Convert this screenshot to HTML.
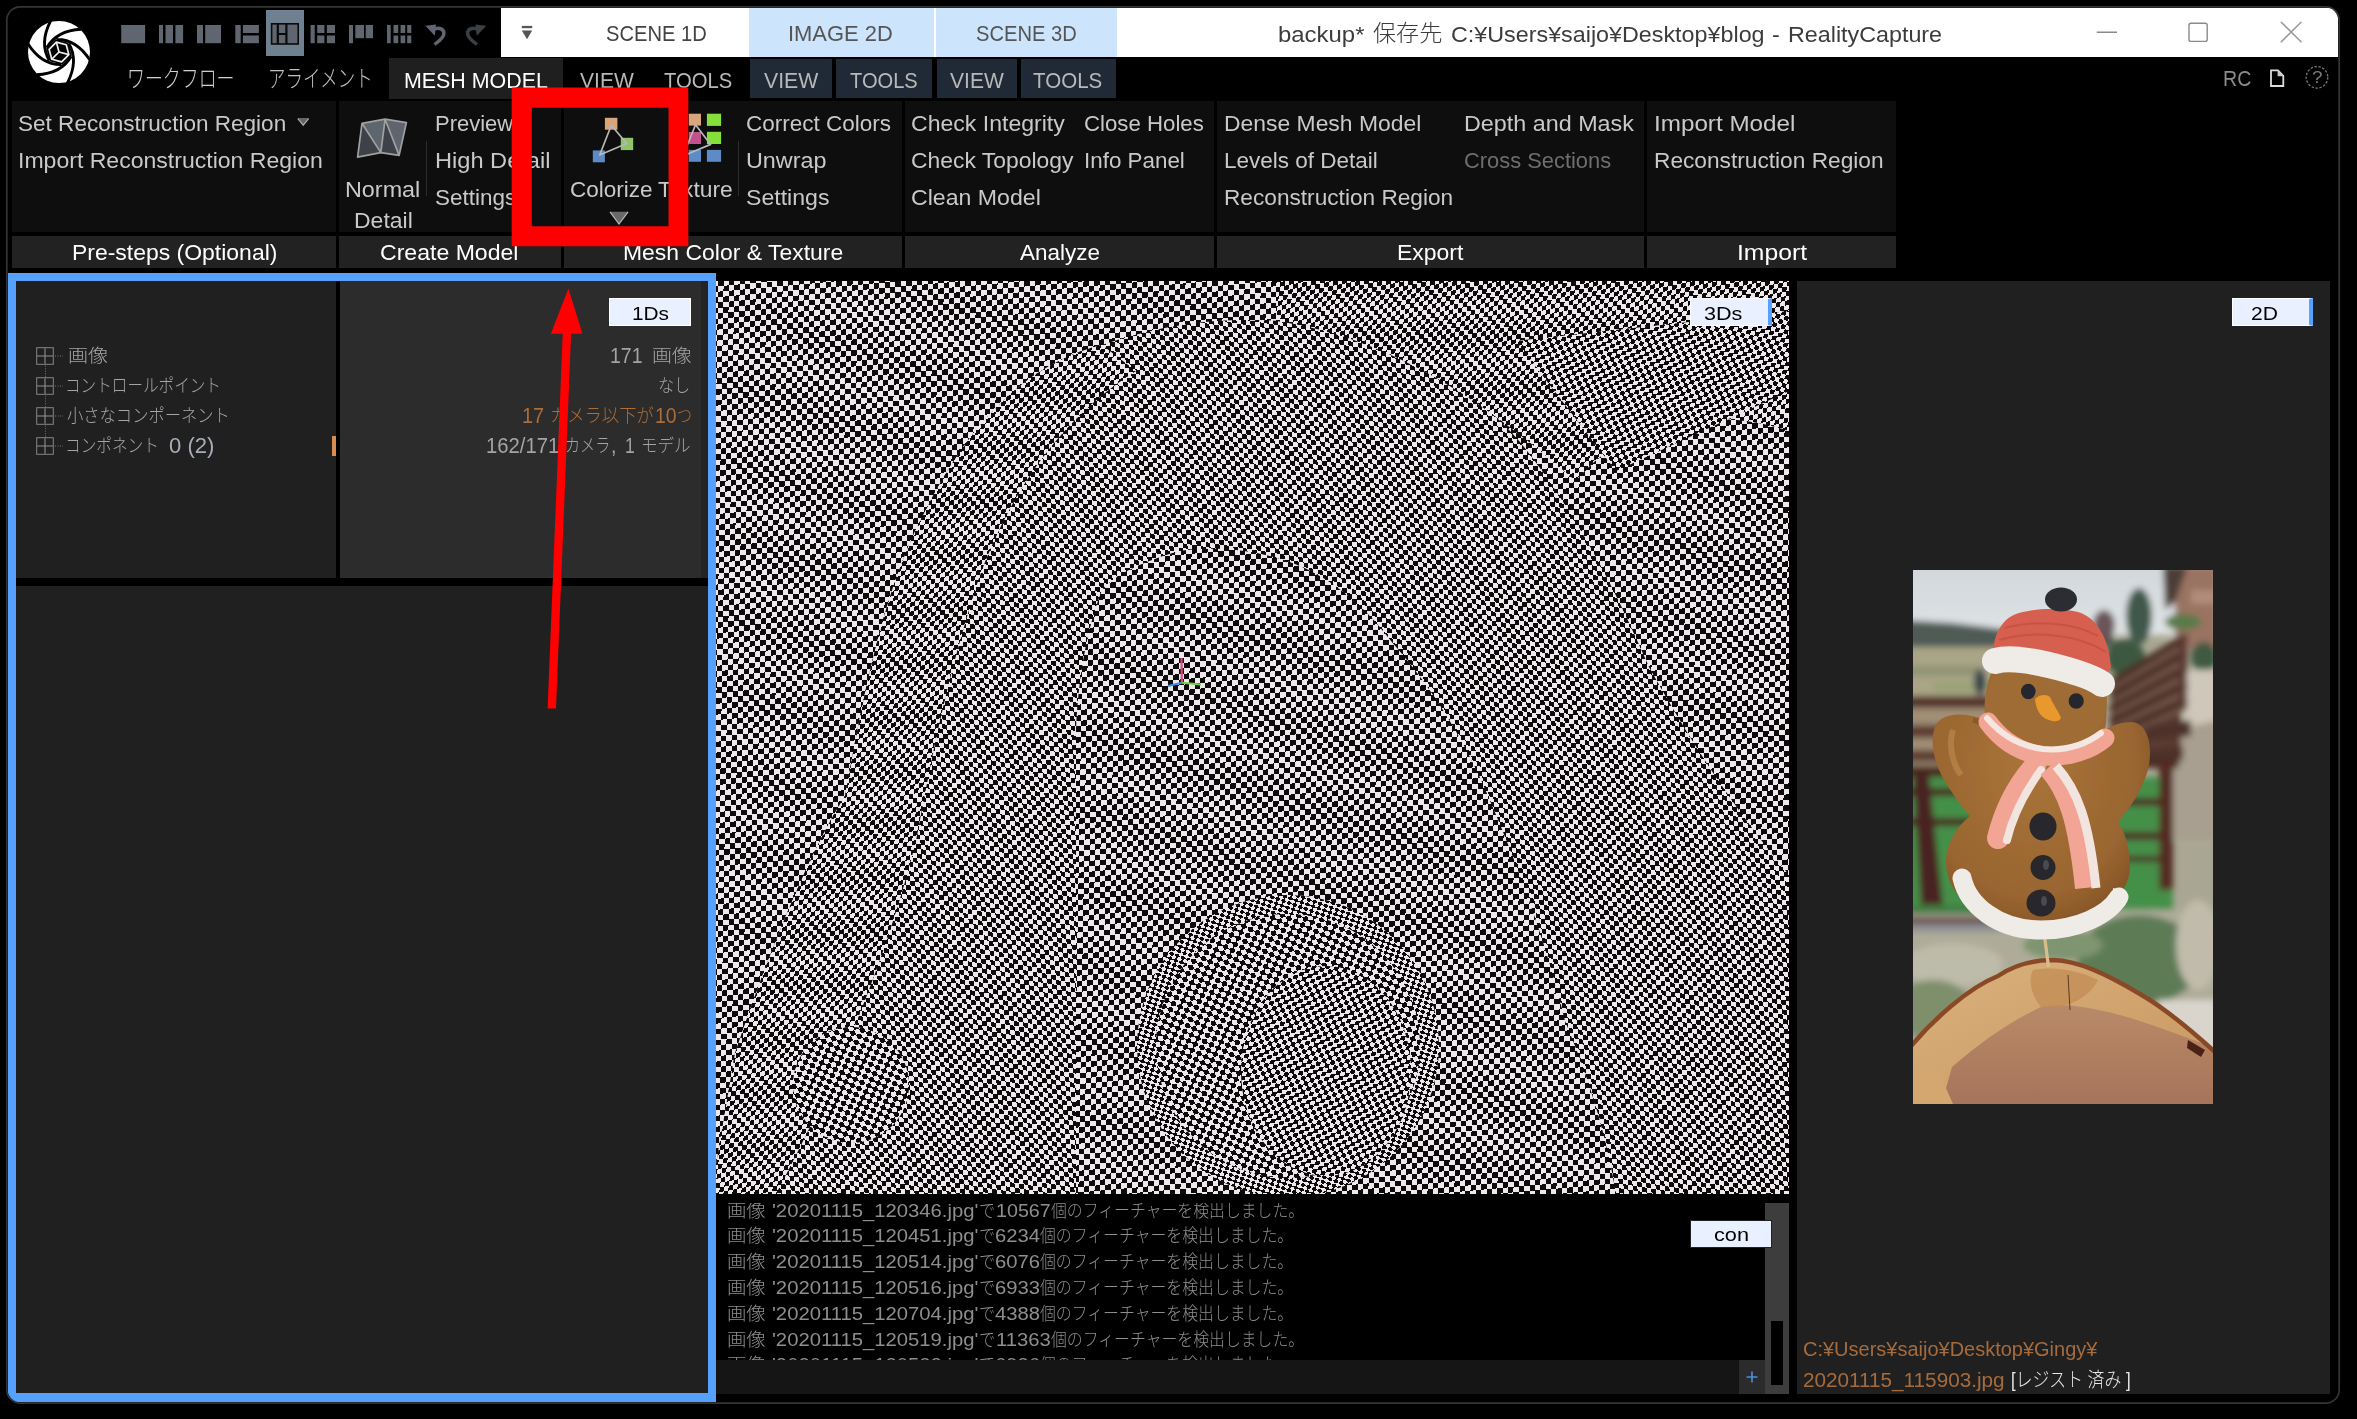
<!DOCTYPE html>
<html lang="ja"><head><meta charset="utf-8"><title>RealityCapture</title>
<style>
html,body{margin:0;padding:0;background:#000;}
body{width:2357px;height:1419px;position:relative;overflow:hidden;font-family:"Liberation Sans","Noto Sans CJK JP",sans-serif;}
.a{position:absolute;}
.t{position:absolute;white-space:pre;transform-origin:0 0;display:block;}

#texts,#over,#base{position:absolute;left:0;top:0;width:2357px;height:1419px;}
#base{clip-path:inset(7.6px 18.9px 16.9px 7.6px round 12.5px);}
.rb{position:absolute;background:#0e0e0e;top:101px;height:131px;}
.rl{position:absolute;background:#222222;top:236px;height:32px;}
.vd{position:absolute;width:1px;background:#2c2c2c;top:141px;height:55px;}
.lbl{position:absolute;background:#e9f0ff;border:1px solid #fff;box-sizing:border-box;}
.v3{position:absolute;left:716px;top:281px;width:1073px;height:913px;overflow:hidden;isolation:isolate;background:#0c0a0b;}
.cl{position:absolute;left:0;top:0;width:1073px;height:913px;}
.ckr{position:absolute;left:-500px;top:-500px;width:2073px;height:1913px;transform-origin:50% 50%;}
.ckr i,.ckr b{position:absolute;left:0;top:0;right:0;bottom:0;display:block;}
.ckr i{background:repeating-linear-gradient(90deg,#000 0,#000 var(--c),#eee8ec var(--c),#eee8ec calc(2*var(--c)));}
.ckr b{background:repeating-linear-gradient(0deg,#000 0,#000 var(--c),#eee8ec var(--c),#eee8ec calc(2*var(--c)));mix-blend-mode:difference;}
.lift{position:absolute;left:0;top:0;right:0;bottom:0;background:#0c0a0b;mix-blend-mode:lighten;}

</style></head>
<body>
<svg class="a" style="left:0;top:0;" width="2357" height="1419"><rect x="6.8" y="6.8" width="2332.4" height="1396.4" rx="13.5" fill="#000" stroke="#353535" stroke-width="1.7"/></svg>
<div id="base">
<!-- title bar -->
<div class="a" style="left:501px;top:8px;width:1837px;height:49px;background:#fff;"></div>
<div class="a" style="left:749px;top:8px;width:185px;height:49px;background:#cce4fc;"></div>
<div class="a" style="left:936px;top:8px;width:181px;height:49px;background:#cce4fc;"></div>
<!-- selected layout icon bg -->
<div class="a" style="left:266px;top:10px;width:38px;height:46px;background:#6f8090;"></div>
<!-- menu tabs -->
<div class="a" style="left:389px;top:58px;width:174px;height:41px;background:#1f1f1f;"></div>
<div class="a" style="left:750px;top:59px;width:82px;height:39px;background:#202a36;"></div>
<div class="a" style="left:836px;top:59px;width:96px;height:39px;background:#202a36;"></div>
<div class="a" style="left:937px;top:59px;width:80px;height:39px;background:#202a36;"></div>
<div class="a" style="left:1021px;top:59px;width:95px;height:39px;background:#202a36;"></div>
<!-- ribbon groups -->
<div class="rb" style="left:12px;width:324px;"></div><div class="rl" style="left:12px;width:324px;"></div>
<div class="rb" style="left:339px;width:222px;"></div><div class="rl" style="left:339px;width:222px;"></div>
<div class="rb" style="left:564px;width:338px;"></div><div class="rl" style="left:564px;width:338px;"></div>
<div class="rb" style="left:905px;width:309px;"></div><div class="rl" style="left:905px;width:309px;"></div>
<div class="rb" style="left:1217px;width:427px;"></div><div class="rl" style="left:1217px;width:427px;"></div>
<div class="rb" style="left:1647px;width:249px;"></div><div class="rl" style="left:1647px;width:249px;"></div>
<div class="vd" style="left:426px;"></div>
<div class="vd" style="left:738px;"></div>
<!-- left panel -->
<div class="a" style="left:8px;top:273px;width:708px;height:1129px;background:#55a1fd;"></div>
<div class="a" style="left:16px;top:281px;width:692px;height:1112px;background:#000;"></div>
<div class="a" style="left:16px;top:281px;width:320px;height:297px;background:#202020;"></div>
<div class="a" style="left:340px;top:281px;width:361px;height:297px;background:#2c2c2c;"></div>
<div class="a" style="left:701px;top:281px;width:7px;height:297px;background:#242424;"></div>
<div class="a" style="left:16px;top:586px;width:692px;height:807px;background:#202020;"></div>
<div class="a" style="left:332px;top:436px;width:4px;height:20px;background:#d98c52;"></div>
<!-- 3D view -->
<div class="v3">
<div class="ckr" style="--c:5.4px;transform:rotate(-5deg) skewX(-6deg);"><i></i><b></b></div>
<div class="cl" style="clip-path:path('M-5,913 L19,772 C60,650 100,560 129,515 C150,400 170,300 212,225 C260,130 320,80 386,64 C470,35 540,35 611,45 C700,70 760,110 804,161 C860,230 900,310 933,386 C980,470 1020,530 1078,600 L1078,913 L900,913 C890,850 870,790 849,740 C830,660 800,580 772,515 C745,450 710,400 675,360 C645,320 610,295 579,283 C540,268 500,265 463,270 C430,280 400,292 386,309 C370,350 362,400 360,450 L360,913 Z');"><div class="ckr" style="--c:4.7px;transform:rotate(9deg) skewX(14deg);"><i></i><b></b></div></div>
<div class="cl" style="clip-path:path('M19,772 C60,650 100,560 129,515 C150,400 170,300 212,225 C260,130 320,80 386,64 L420,90 C340,140 290,220 262,300 C230,400 215,480 200,560 C170,680 120,800 60,913 L-5,913 Z');"><div class="ckr" style="--c:4.6px;transform:rotate(-11deg) skewX(-18deg);"><i></i><b></b></div></div>
<div class="cl" style="clip-path:circle(151px at 572px 765px);"><div class="ckr" style="--c:3.8px;transform:rotate(-20deg) skewX(12deg);"><i></i><b></b></div></div>
<div class="cl" style="clip-path:circle(132px at 572px 765px);"><div class="ckr" style="--c:5.0px;transform:rotate(-16deg) skewX(6deg);"><i></i><b></b></div></div>
<div class="cl" style="clip-path:ellipse(85px 105px at 610px 790px);"><div class="ckr" style="--c:4.4px;transform:rotate(13deg) skewX(-8deg);"><i></i><b></b></div></div>
<div class="cl" style="clip-path:circle(58px at 135px 804px);"><div class="ckr" style="--c:5.0px;transform:rotate(-16deg) skewX(6deg);"><i></i><b></b></div></div>
<div class="cl" style="clip-path:path('M560,0 L1073,0 L1073,150 C980,120 900,150 860,200 C800,150 700,60 560,40 Z');"><div class="ckr" style="--c:4.6px;transform:rotate(-11deg) skewX(-18deg);"><i></i><b></b></div></div>
<div class="cl" style="clip-path:path('M800,60 L1073,30 L1073,110 L900,190 Z');"><div class="ckr" style="--c:4.4px;transform:rotate(13deg) skewX(-8deg);"><i></i><b></b></div></div>
<div class="lift"></div>
<svg class="a" style="left:0;top:0;" width="1073" height="913" viewBox="0 0 1073 913">
<path d="M465.8,401.7 L465.5,377" stroke="#d94a7a" stroke-width="2.2"/>
<path d="M465.8,401.7 L485,403.5" stroke="#6fd43a" stroke-width="2"/>
<path d="M465.8,401.7 L452,405" stroke="#3a8ae0" stroke-width="2"/>
</svg>
</div>
<!-- console -->
<div class="a" style="left:716px;top:1194px;width:1073px;height:166px;background:#000;"></div>
<div class="a" style="left:716px;top:1360px;width:1049px;height:34px;background:#151515;"></div>
<div class="a" style="left:1765px;top:1203px;width:24px;height:191px;background:#3d3d3d;"></div>
<div class="a" style="left:1771px;top:1321px;width:12px;height:64px;background:#000;"></div>
<div class="a" style="left:1739px;top:1360px;width:26px;height:34px;background:#2b2b2b;"></div>
<!-- 2D panel -->
<div class="a" style="left:1797px;top:281px;width:533px;height:1113px;background:#202020;"></div>
<svg class="a" style="left:1913px;top:570px;" width="300" height="534" viewBox="0 0 300 534">
<defs>
<filter id="b3" x="-10%" y="-10%" width="120%" height="120%"><feGaussianBlur stdDeviation="3"/></filter>
<filter id="b1" x="-10%" y="-10%" width="120%" height="120%"><feGaussianBlur stdDeviation="1.2"/></filter>
<filter id="b05"><feGaussianBlur stdDeviation="0.6"/></filter>
<linearGradient id="sky" x1="0" y1="0" x2="0" y2="1"><stop offset="0" stop-color="#cfd6db"/><stop offset="1" stop-color="#dfe3e4"/></linearGradient>
<radialGradient id="ck1" cx="0.45" cy="0.4" r="0.7"><stop offset="0" stop-color="#a9753a"/><stop offset="0.7" stop-color="#996530"/><stop offset="1" stop-color="#7a4c22"/></radialGradient>
<linearGradient id="wood" x1="0" y1="0" x2="1" y2="1"><stop offset="0" stop-color="#dab27c"/><stop offset="1" stop-color="#c89560"/></linearGradient>
<linearGradient id="heart" x1="0" y1="0" x2="0" y2="1"><stop offset="0" stop-color="#b98a68"/><stop offset="1" stop-color="#a6735a"/></linearGradient>
<clipPath id="pc"><rect width="300" height="534"/></clipPath>
</defs>
<g clip-path="url(#pc)">
<rect width="300" height="534" fill="#a9a794"/>
<g filter="url(#b3)">
<rect x="-10" y="-10" width="320" height="75" fill="url(#sky)"/>
<path d="M-10,50 L40,53 L90,59 L200,62 L200,82 L-10,80 Z" fill="#4f5b56"/>
<rect x="-10" y="77" width="215" height="55" fill="#aaa587"/>
<rect x="-10" y="96" width="80" height="10" fill="#8f9474"/>
<rect x="20" y="112" width="60" height="10" fill="#9aa377"/>
<ellipse cx="67" cy="112" rx="6" ry="13" fill="#39424d"/>
<!-- right building / trees -->
<path d="M252,-5 L305,-5 L305,80 L262,80 L262,30 Z" fill="#9a7362"/>
<path d="M250,-5 L275,-5 L262,32 L252,40 Z" fill="#4d3d38"/>
<rect x="278" y="20" width="25" height="14" fill="#b08c7c"/>
<ellipse cx="226" cy="46" rx="13" ry="28" fill="#40594b"/>
<ellipse cx="191" cy="55" rx="11" ry="15" fill="#6a5558"/>
<ellipse cx="212" cy="88" rx="20" ry="19" fill="#3d5840"/>
<ellipse cx="270" cy="52" rx="18" ry="8" fill="#5a7a4a"/>
<ellipse cx="291" cy="87" rx="13" ry="15" fill="#3f5a42"/>
<rect x="270" y="100" width="35" height="62" fill="#cfc8ba"/>
<path d="M262,160 L305,150 L305,270 L258,270 Z" fill="#a99f90"/><path d="M205,140 L268,120 L268,190 L205,190 Z" fill="#5a3a30"/>
<!-- left deck -->
<rect x="-10" y="126" width="95" height="84" fill="#a08e76"/>
<rect x="-10" y="126" width="90" height="12" fill="#553329"/>
<rect x="-10" y="155" width="90" height="13" fill="#5e3d32"/>
<rect x="-10" y="180" width="90" height="12" fill="#5e3d32"/>
<rect x="-10" y="196" width="100" height="13" fill="#48261f"/>
<!-- stairs rail right -->
<path d="M197,113 L274,66 L274,140 L197,172 Z" fill="#6f5548"/>
<path d="M197,113 L274,66 M197,126 L274,82 M197,139 L274,98 M197,152 L274,114 M197,165 L274,130" stroke="#4a2a23" stroke-width="7" fill="none"/>
<rect x="266" y="66" width="8" height="72" fill="#5a3830"/>
<path d="M233,156 L278,150 L278,166 L233,170 Z M225,182 L270,176 L270,190 L225,196 Z" fill="#4e3029"/>
<!-- grass + fences lower -->
<rect x="-10" y="207" width="270" height="140" fill="#459048"/>
<rect x="-10" y="218" width="95" height="8" fill="#4a2621"/>
<rect x="-10" y="248" width="95" height="8" fill="#4a2621"/>
<path d="M0,205 L16,205 L30,335 L8,335 Z" fill="#4a2420"/>
<rect x="200" y="189" width="66" height="9" fill="#4e2c26"/>
<rect x="200" y="228" width="60" height="8" fill="#4e2c26"/>
<rect x="200" y="262" width="58" height="8" fill="#4e2c26"/>
<rect x="205" y="286" width="50" height="6" fill="#4e2c26"/>
<rect x="246" y="190" width="14" height="130" fill="#522a24"/>
<!-- lower ground -->
<rect x="-10" y="340" width="320" height="150" fill="#aeac99"/>
<rect x="-10" y="336" width="110" height="8" fill="#3d7a3f"/>
<rect x="-10" y="347" width="100" height="7" fill="#6b4b4a"/>
<rect x="-10" y="354" width="100" height="8" fill="#8d9094"/>
<ellipse cx="226" cy="390" rx="62" ry="45" fill="#5d7b57"/>
<ellipse cx="150" cy="375" rx="40" ry="15" fill="#7f9470"/>
<ellipse cx="40" cy="395" rx="50" ry="22" fill="#bdbba9"/>
<ellipse cx="20" cy="440" rx="40" ry="30" fill="#7f8f6c"/>
<ellipse cx="285" cy="375" rx="22" ry="45" fill="#c0bbab"/>
<rect x="245" y="430" width="60" height="50" fill="#d9d5cd"/>
</g>
<!-- log -->
<g filter="url(#b05)">
<path d="M-2,476 C20,450 55,418 85,406 C100,396 120,390 140,390 C165,391 190,402 227,424 C255,440 280,462 302,482 L302,536 L-2,536 Z" fill="url(#wood)"/>
<path d="M39,497 C70,470 100,450 128,437 C150,433 170,436 190,441 C215,446 240,455 302,478 L302,536 L28,536 Z" fill="url(#heart)"/>
<path d="M120,400 C140,396 165,400 185,410 C175,430 150,440 128,437 C118,425 115,410 120,400 Z" fill="#c08a52" opacity="0.7"/>
<path d="M-2,476 C20,450 55,418 85,406 C100,396 120,390 140,390 C165,391 190,402 227,424 C255,440 280,462 302,482" fill="none" stroke="#8a4a26" stroke-width="4.5"/>
<path d="M275,470 L292,480 L288,487 L274,478 Z" fill="#4a2418"/>
<path d="M155,405 L157,440" stroke="#5a3a20" stroke-width="1"/>
<path d="M0,495 L25,500 L40,534 L0,534 Z" fill="#d4a770"/>
</g>
<!-- stick -->
<path d="M131.5,366 L135.5,397" stroke="#dcbc8e" stroke-width="3.2"/>
<!-- cookie -->
<g filter="url(#b05)">
<path d="M72,150 C55,143 35,142 25,152 C15,165 20,190 30,208 C40,225 50,238 57,246 C42,258 33,275 33,292 C33,330 75,357 125,357 C175,357 217,330 217,297 C217,278 212,262 205,252 C220,235 232,215 236,195 C240,170 232,152 218,152 C208,152 198,156 192,160 C197,130 190,100 170,88 L90,85 C75,100 70,125 72,150 Z" fill="url(#ck1)"/>
<ellipse cx="133" cy="132" rx="61" ry="50" fill="#a06c34"/>
<path d="M40,160 C35,175 40,195 48,205" stroke="#c49355" stroke-width="6" fill="none" opacity="0.5"/>
<path d="M60,150 C70,152 75,158 78,165" stroke="#7a4e22" stroke-width="5" fill="none" opacity="0.6"/>
</g>
<!-- bottom icing arc -->
<path d="M49,308 C55,335 85,360 128,360 C165,360 195,345 206,327" fill="none" stroke="#efebe6" stroke-width="19" stroke-linecap="round"/>
<path d="M200,318 L214,322 L212,336 L200,334 Z" fill="#efebe6"/>
<!-- hat -->
<path d="M80,80 C82,60 92,45 110,42 C125,38 150,38 165,42 C185,48 196,70 198,97 L190,110 L85,92 Z" fill="#d65f4f"/>
<path d="M92,58 C120,50 160,52 185,66 M86,70 C120,60 165,64 193,82" stroke="#c24f42" stroke-width="2" fill="none" opacity="0.7"/>
<ellipse cx="148" cy="29.5" rx="16" ry="12" fill="#2b2d33"/>
<path d="M82,91 C100,86 130,93 155,100 C172,105 184,110 189,114" fill="none" stroke="#efebe7" stroke-width="26" stroke-linecap="round"/>
<!-- face -->
<ellipse cx="115.3" cy="121.5" rx="7.3" ry="7.8" fill="#25272e" filter="url(#b05)"/>
<ellipse cx="163.2" cy="131" rx="7.6" ry="7.8" fill="#25272e" filter="url(#b05)"/>
<path d="M122,129 C126,124 134,124 137,127 C141,136 146,142 148,148 C146,152 141,152 136,150 C128,148 123,140 122,129 Z" fill="#e8982c"/>
<!-- scarf -->
<path d="M75,152 C88,170 105,182 130,186 C155,188 178,180 192,168" fill="none" stroke="#f3a595" stroke-width="19" stroke-linecap="round"/>
<path d="M74,148 C88,165 108,176 130,179 C152,181 172,175 188,163" fill="none" stroke="#f4e6e0" stroke-width="6" stroke-linecap="round"/>
<path d="M122,196 C105,215 92,240 85,268" fill="none" stroke="#f3a595" stroke-width="22" stroke-linecap="round"/>
<path d="M128,200 C112,222 100,245 94,270" fill="none" stroke="#f2e4de" stroke-width="8" stroke-linecap="round"/>
<path d="M135,198 C155,220 165,250 172,318" fill="none" stroke="#f3a595" stroke-width="20" stroke-linecap="butt"/>
<path d="M143,196 C165,220 176,252 183,318" fill="none" stroke="#f2e4de" stroke-width="9" stroke-linecap="butt"/>
<!-- buttons -->
<ellipse cx="130" cy="256.5" rx="13.5" ry="14" fill="#27272c"/>
<ellipse cx="130" cy="297.5" rx="12.5" ry="12.5" fill="#27272c"/>
<ellipse cx="128" cy="333" rx="14.5" ry="13.5" fill="#27272c"/>
<ellipse cx="133" cy="295" rx="3" ry="5" fill="#5a5a62" opacity="0.7"/>
<ellipse cx="131" cy="331" rx="3" ry="5" fill="#5a5a62" opacity="0.7"/>
</g>
</svg>

<svg class="a" style="left:24.6px;top:18.4px;" width="68" height="68" viewBox="-34 -34 68 68">
<circle r="31" fill="#fff"/>
<path d="M30.92,8.03 Q17.20,-13.05 -2.41,-12.56 M8.51,30.79 Q19.90,8.37 9.67,-8.37 M-22.41,22.76 Q2.70,21.42 12.08,4.19 M-30.92,-8.03 Q-17.20,13.05 2.41,12.56 M-8.51,-30.79 Q-19.90,-8.37 -9.67,8.37 M22.41,-22.76 Q-2.70,-21.42 -12.08,-4.19" fill="none" stroke="#000" stroke-width="2.9"/>
<polygon points="12.75,3.42 3.42,12.75 -9.33,9.33 -12.75,-3.42 -3.42,-12.75 9.33,-9.33" fill="#000"/>
<polygon points="9.85,2.64 2.64,9.85 -7.21,7.21 -9.85,-2.64 -2.64,-9.85 7.21,-7.21" fill="#000" stroke="#f0f0f0" stroke-width="1.7" stroke-linejoin="round"/>
<path d="M0,0 L9.85,2.64 M0,0 L-7.21,7.21 M0,0 L-2.64,-9.85" stroke="#f0f0f0" stroke-width="1.7"/>
</svg>
<svg class="a" style="left:0;top:0;" width="2357" height="1419" viewBox="0 0 2357 1419">
<rect x="121.2" y="25" width="23.9" height="18.2" fill="#5f6670"/>
<rect x="159" y="25" width="4.0" height="18.2" fill="#5f6670"/>
<rect x="165.5" y="25" width="7.5" height="18.2" fill="#5f6670"/>
<rect x="175.4" y="25" width="7.7" height="18.2" fill="#5f6670"/>
<rect x="197" y="25" width="6.0" height="18.2" fill="#5f6670"/>
<rect x="205.2" y="25" width="15.8" height="18.2" fill="#5f6670"/>
<rect x="235.3" y="25" width="5.4" height="18.2" fill="#5f6670"/>
<rect x="242.9" y="25" width="16.0" height="8.0" fill="#5f6670"/>
<rect x="242.9" y="35.5" width="16.0" height="7.7" fill="#5f6670"/>
<rect x="271.6" y="23.8" width="26.6" height="20.2" fill="#5f6670" stroke="#0a0a0a" stroke-width="1.6"/>
<path d="M277.8,24 V44 M286.4,24 V44 M277.8,34 H286.4" stroke="#0a0a0a" stroke-width="2.2" fill="none"/>
<rect x="310.6" y="25" width="4.1" height="18.2" fill="#5f6670"/>
<rect x="317.2" y="25" width="7.2" height="8.0" fill="#5f6670"/>
<rect x="326.9" y="25" width="8.1" height="8.0" fill="#5f6670"/>
<rect x="317.2" y="35.5" width="7.2" height="7.7" fill="#5f6670"/>
<rect x="326.9" y="35.5" width="8.1" height="7.7" fill="#5f6670"/>
<rect x="349" y="25" width="4.0" height="18.2" fill="#5f6670"/>
<rect x="355.3" y="25" width="8.7" height="13.2" fill="#5f6670"/>
<rect x="365.7" y="25" width="7.3" height="13.2" fill="#5f6670"/>
<rect x="387" y="25" width="3.7" height="18.2" fill="#5f6670"/>
<rect x="393.5" y="25" width="4.7" height="8.0" fill="#5f6670"/>
<rect x="393.5" y="35.5" width="4.7" height="7.7" fill="#5f6670"/>
<rect x="400.6" y="25" width="4.6" height="8.0" fill="#5f6670"/>
<rect x="400.6" y="35.5" width="4.6" height="7.7" fill="#5f6670"/>
<rect x="407.2" y="25" width="4.1" height="8.0" fill="#5f6670"/>
<rect x="407.2" y="35.5" width="4.1" height="7.7" fill="#5f6670"/>
<g transform="translate(425,24.3)"><path d="M8.5,5.2 C14,2.2 19.8,5 18.8,10 C18,14 13.5,17 9.5,20.2" fill="none" stroke="#5f6670" stroke-width="3.4" stroke-linecap="butt"/><path d="M0.3,1.5 L11,0.2 L9.8,11.5 Z" fill="#5f6670"/></g>
<g transform="translate(465.5,24.3) scale(-1,1) translate(-21,0)"><path d="M8.5,5.2 C14,2.2 19.8,5 18.8,10 C18,14 13.5,17 9.5,20.2" fill="none" stroke="#3c4046" stroke-width="3.4" stroke-linecap="butt"/><path d="M0.3,1.5 L11,0.2 L9.8,11.5 Z" fill="#3c4046"/></g>
<rect x="521.8" y="25.9" width="10.4" height="2.3" fill="#555"/><polygon points="521.8,30.5 532.2,30.5 527,39.2" fill="#555"/>
<path d="M2096.7,32.3 H2117" stroke="#8a8a8a" stroke-width="1.4"/>
<rect x="2189" y="23.2" width="18.2" height="18.2" rx="2" fill="none" stroke="#8a8a8a" stroke-width="1.4"/>
<path d="M2281.3,22.3 L2301,41.8 M2301,22.3 L2281.3,41.8" stroke="#9a9a9a" stroke-width="1.6" stroke-linecap="round"/>
<path d="M2271,70.3 H2278 L2283.3,75.8 V86 H2271 Z" fill="none" stroke="#dcdcdc" stroke-width="1.8"/><path d="M2277.6,70.5 L2283.2,76.2 H2277.6 Z" fill="#c8c8c8"/>
<circle cx="2317" cy="77.3" r="10.8" fill="none" stroke="#777" stroke-width="1.3" stroke-dasharray="2.4 1.6"/>
<polygon points="362.0,123.3 385.1,119.2 380.8,152.6" fill="#5e656e"/><polygon points="362.0,123.3 380.8,152.6 357.6,157.2" fill="#3e4147"/><polygon points="385.1,119.2 399.1,155.4 380.8,152.6" fill="#3e4147"/><polygon points="385.1,119.2 406.4,122.6 399.1,155.4" fill="#5e656e"/><path d="M362.0,123.3 L385.1,119.2 L406.4,122.6 L399.1,155.4 L380.8,152.6 L357.6,157.2 Z M362.0,123.3 L380.8,152.6 L385.1,119.2 L399.1,155.4" fill="none" stroke="#a0a0a0" stroke-width="1.7" stroke-linejoin="round"/>
<rect x="604.9" y="117.8" width="12.5" height="11.9" fill="#d9a67c"/><rect x="620.8" y="137.8" width="12.4" height="12.3" fill="#90c46c"/><rect x="592.8" y="150.4" width="12.1" height="11.9" fill="#5c8bc7"/>
<polygon points="611.3,125.3 626.7,143.5 599.7,155" fill="none" stroke="#b8b8b8" stroke-width="1.7" stroke-linejoin="round"/>
<polygon points="610,211.8 628.1,211.8 619,224.1" fill="#6a6a6a"/><path d="M610,211.8 L619,224.1 L628.1,211.8" fill="none" stroke="#b8b8b8" stroke-width="1.2"/>
<rect x="688.8" y="113.7" width="12.2" height="11.9" fill="#d9a67c"/><rect x="688.8" y="132" width="12.2" height="12.0" fill="#c2528c"/><rect x="688.8" y="149.9" width="12.2" height="11.9" fill="#5c8bc7"/>
<rect x="706.9" y="113.7" width="14.2" height="12.2" fill="#86e03c"/><rect x="706.9" y="131.8" width="14.2" height="12.2" fill="#86e03c"/><rect x="706.9" y="149.9" width="14.2" height="11.9" fill="#5c8bc7"/>
<polygon points="695.5,124.7 710.6,144.4 683,156" fill="none" stroke="#b8b8b8" stroke-width="1.7" stroke-linejoin="round"/>
<polygon points="297.5,118 309,118 303.2,125.6" fill="#666"/><path d="M297.8,118.6 L303.2,125.2 L308.7,118.6" fill="none" stroke="#a8a8a8" stroke-width="1.2"/>
<path d="M1746.5,1377 H1757.5 M1752,1371.5 V1382.5" stroke="#4a8fe0" stroke-width="1.6"/>
<rect x="36.7" y="347.7" width="16.6" height="16.6" fill="none" stroke="#858585" stroke-width="1"/><path d="M37,356.0 H53 M45,348.2 V363.8" stroke="#909090" stroke-width="1.1"/><path d="M55,356.0 H63" stroke="#777" stroke-width="1" stroke-dasharray="1 1.5"/>
<path d="M45.5,365.7 V376.7" stroke="#777" stroke-width="1" stroke-dasharray="1 1.5"/>
<rect x="36.7" y="377.7" width="16.6" height="16.6" fill="none" stroke="#858585" stroke-width="1"/><path d="M37,386.0 H53 M45,378.2 V393.8" stroke="#909090" stroke-width="1.1"/><path d="M55,386.0 H63" stroke="#777" stroke-width="1" stroke-dasharray="1 1.5"/>
<path d="M45.5,395.7 V406.7" stroke="#777" stroke-width="1" stroke-dasharray="1 1.5"/>
<rect x="36.7" y="407.7" width="16.6" height="16.6" fill="none" stroke="#858585" stroke-width="1"/><path d="M37,416.0 H53 M45,408.2 V423.8" stroke="#909090" stroke-width="1.1"/><path d="M55,416.0 H63" stroke="#777" stroke-width="1" stroke-dasharray="1 1.5"/>
<path d="M45.5,425.7 V436.7" stroke="#777" stroke-width="1" stroke-dasharray="1 1.5"/>
<rect x="36.7" y="437.7" width="16.6" height="16.6" fill="none" stroke="#858585" stroke-width="1"/><path d="M37,446.0 H53 M45,438.2 V453.8" stroke="#909090" stroke-width="1.1"/><path d="M55,446.0 H63" stroke="#777" stroke-width="1" stroke-dasharray="1 1.5"/>
</svg>

<!-- labels -->
<div class="lbl" style="left:609px;top:298px;width:82px;height:28px;"></div>
<div class="lbl" style="left:1690px;top:298px;width:82px;height:28px;border-right:4px solid #55a1fd;"></div>
<div class="lbl" style="left:2232px;top:298px;width:81px;height:28px;border-right:4px solid #55a1fd;"></div>
<div class="lbl" style="left:1690px;top:1220px;width:82px;height:28px;border:1px solid #222;"></div>
</div>

<div id="texts">
<span class="t" id="t0" style="left:1278.4px;top:23.8px;font-size:22.2px;line-height:22.2px;color:#3c3c3c;transform:scaleX(1.0784);">backup*</span>
<span class="t" id="t1" style="left:1373.4px;top:23.1px;font-size:22.5px;line-height:22.5px;color:#3c3c3c;font-weight:300;transform:scaleX(1.0264);">保存先</span>
<span class="t" id="t2" style="left:1450.7px;top:23.8px;font-size:22.2px;line-height:22.2px;color:#3c3c3c;transform:scaleX(1.0506);">C:¥Users¥saijo¥Desktop¥blog</span>
<span class="t" id="t3" style="left:1772.3px;top:23.8px;font-size:22.2px;line-height:22.2px;color:#3c3c3c;transform:scaleX(1.0521);">-</span>
<span class="t" id="t4" style="left:1788.4px;top:23.8px;font-size:22.2px;line-height:22.2px;color:#3c3c3c;transform:scaleX(1.0498);">RealityCapture</span>
<span class="t" id="t5" style="left:606.1px;top:23.7px;font-size:21.5px;line-height:21.5px;color:#444;transform:scaleX(0.9365);">SCENE 1D</span>
<span class="t" id="t6" style="left:788.1px;top:23.7px;font-size:21.5px;line-height:21.5px;color:#555;transform:scaleX(1.0192);">IMAGE 2D</span>
<span class="t" id="t7" style="left:976.1px;top:23.7px;font-size:21.5px;line-height:21.5px;color:#555;transform:scaleX(0.9365);">SCENE 3D</span>
<span class="t" id="t8" style="left:126.5px;top:68.3px;font-size:23.5px;line-height:23.5px;color:#d0d0d0;font-weight:300;transform:scaleX(0.7623);">ワークフロー</span>
<span class="t" id="t9" style="left:267.5px;top:68.3px;font-size:23.5px;line-height:23.5px;color:#c0c0c0;font-weight:300;transform:scaleX(0.7424);">アライメント</span>
<span class="t" id="t10" style="left:404.2px;top:69.5px;font-size:22.2px;line-height:22.2px;color:#ffffff;transform:scaleX(0.9645);">MESH MODEL</span>
<span class="t" id="t11" style="left:579.6px;top:69.5px;font-size:22.2px;line-height:22.2px;color:#b8b8b8;transform:scaleX(0.9481);">VIEW</span>
<span class="t" id="t12" style="left:663.6px;top:69.5px;font-size:22.2px;line-height:22.2px;color:#b8b8b8;transform:scaleX(0.9126);">TOOLS</span>
<span class="t" id="t13" style="left:763.6px;top:69.5px;font-size:22.2px;line-height:22.2px;color:#b8b8b8;transform:scaleX(0.9569);">VIEW</span>
<span class="t" id="t14" style="left:850.1px;top:69.5px;font-size:22.2px;line-height:22.2px;color:#b8b8b8;transform:scaleX(0.9059);">TOOLS</span>
<span class="t" id="t15" style="left:949.6px;top:69.5px;font-size:22.2px;line-height:22.2px;color:#b8b8b8;transform:scaleX(0.9481);">VIEW</span>
<span class="t" id="t16" style="left:1033.1px;top:69.5px;font-size:22.2px;line-height:22.2px;color:#b8b8b8;transform:scaleX(0.9260);">TOOLS</span>
<span class="t" id="t17" style="left:2223.1px;top:68.0px;font-size:22.4px;line-height:22.4px;color:#8c8c8c;transform:scaleX(0.8747);">RC</span>
<span class="t" id="t18" style="left:2311.6px;top:69.2px;font-size:17px;line-height:17px;color:#7a7a7a;transform:scaleX(1.1152);">?</span>
<span class="t" id="t19" style="left:18.4px;top:112.5px;font-size:22.5px;line-height:22.5px;color:#c9c9c9;transform:scaleX(1.0020);">Set Reconstruction Region</span>
<span class="t" id="t20" style="left:18.4px;top:149.8px;font-size:22.5px;line-height:22.5px;color:#c9c9c9;transform:scaleX(1.0243);">Import Reconstruction Region</span>
<span class="t" id="t21" style="left:345.1px;top:179.0px;font-size:22.5px;line-height:22.5px;color:#c9c9c9;transform:scaleX(1.0384);">Normal</span>
<span class="t" id="t22" style="left:353.5px;top:210.0px;font-size:22.5px;line-height:22.5px;color:#c9c9c9;transform:scaleX(1.0221);">Detail</span>
<span class="t" id="t23" style="left:434.7px;top:112.5px;font-size:22.5px;line-height:22.5px;color:#c9c9c9;transform:scaleX(0.9771);">Preview</span>
<span class="t" id="t24" style="left:434.7px;top:149.8px;font-size:22.5px;line-height:22.5px;color:#c9c9c9;transform:scaleX(1.0494);">High Detail</span>
<span class="t" id="t25" style="left:434.7px;top:187.1px;font-size:22.5px;line-height:22.5px;color:#c9c9c9;transform:scaleX(0.9986);">Settings</span>
<span class="t" id="t26" style="left:569.8px;top:179.0px;font-size:22.5px;line-height:22.5px;color:#c9c9c9;transform:scaleX(1.0008);">Colorize</span>
<span class="t" id="t27" style="left:657.7px;top:179.0px;font-size:22.5px;line-height:22.5px;color:#c9c9c9;transform:scaleX(1.0136);">Texture</span>
<span class="t" id="t28" style="left:746.4px;top:112.5px;font-size:22.5px;line-height:22.5px;color:#c9c9c9;transform:scaleX(0.9998);">Correct Colors</span>
<span class="t" id="t29" style="left:746.4px;top:149.8px;font-size:22.5px;line-height:22.5px;color:#c9c9c9;transform:scaleX(1.0383);">Unwrap</span>
<span class="t" id="t30" style="left:746.4px;top:187.1px;font-size:22.5px;line-height:22.5px;color:#c9c9c9;transform:scaleX(1.0269);">Settings</span>
<span class="t" id="t31" style="left:911.1px;top:112.5px;font-size:22.5px;line-height:22.5px;color:#c9c9c9;transform:scaleX(1.0249);">Check Integrity</span>
<span class="t" id="t32" style="left:911.1px;top:149.8px;font-size:22.5px;line-height:22.5px;color:#c9c9c9;transform:scaleX(1.0170);">Check Topology</span>
<span class="t" id="t33" style="left:911.1px;top:187.1px;font-size:22.5px;line-height:22.5px;color:#c9c9c9;transform:scaleX(1.0275);">Clean Model</span>
<span class="t" id="t34" style="left:1084.1px;top:112.5px;font-size:22.5px;line-height:22.5px;color:#c9c9c9;transform:scaleX(0.9875);">Close Holes</span>
<span class="t" id="t35" style="left:1084.1px;top:149.8px;font-size:22.5px;line-height:22.5px;color:#c9c9c9;transform:scaleX(0.9948);">Info Panel</span>
<span class="t" id="t36" style="left:1224.1px;top:112.5px;font-size:22.5px;line-height:22.5px;color:#c9c9c9;transform:scaleX(1.0178);">Dense Mesh Model</span>
<span class="t" id="t37" style="left:1224.1px;top:149.8px;font-size:22.5px;line-height:22.5px;color:#c9c9c9;transform:scaleX(0.9997);">Levels of Detail</span>
<span class="t" id="t38" style="left:1224.1px;top:187.1px;font-size:22.5px;line-height:22.5px;color:#c9c9c9;transform:scaleX(1.0069);">Reconstruction Region</span>
<span class="t" id="t39" style="left:1464.4px;top:112.5px;font-size:22.5px;line-height:22.5px;color:#c9c9c9;transform:scaleX(1.0370);">Depth and Mask</span>
<span class="t" id="t40" style="left:1464.4px;top:149.8px;font-size:22.5px;line-height:22.5px;color:#6e6e6e;transform:scaleX(0.9722);">Cross Sections</span>
<span class="t" id="t41" style="left:1653.5px;top:112.5px;font-size:22.5px;line-height:22.5px;color:#c9c9c9;transform:scaleX(1.0768);">Import Model</span>
<span class="t" id="t42" style="left:1653.5px;top:149.8px;font-size:22.5px;line-height:22.5px;color:#c9c9c9;transform:scaleX(1.0086);">Reconstruction Region</span>
<span class="t" id="t43" style="left:72.1px;top:241.9px;font-size:22.5px;line-height:22.5px;color:#fff;transform:scaleX(1.0202);">Pre-steps (Optional)</span>
<span class="t" id="t44" style="left:380.1px;top:241.9px;font-size:22.5px;line-height:22.5px;color:#fff;transform:scaleX(1.0253);">Create Model</span>
<span class="t" id="t45" style="left:623.1px;top:241.9px;font-size:22.5px;line-height:22.5px;color:#fff;transform:scaleX(1.0197);">Mesh Color &amp; Texture</span>
<span class="t" id="t46" style="left:1019.7px;top:241.9px;font-size:22.5px;line-height:22.5px;color:#fff;transform:scaleX(0.9982);">Analyze</span>
<span class="t" id="t47" style="left:1397.1px;top:241.9px;font-size:22.5px;line-height:22.5px;color:#fff;transform:scaleX(1.0210);">Export</span>
<span class="t" id="t48" style="left:1736.7px;top:241.9px;font-size:22.5px;line-height:22.5px;color:#fff;transform:scaleX(1.0978);">Import</span>
<span class="t" id="t49" style="left:632.0px;top:303.5px;font-size:19px;line-height:19px;color:#000;transform:scaleX(1.0954);">1Ds</span>
<span class="t" id="t50" style="left:1703.9px;top:303.5px;font-size:19px;line-height:19px;color:#000;transform:scaleX(1.1368);">3Ds</span>
<span class="t" id="t51" style="left:2250.8px;top:303.5px;font-size:19px;line-height:19px;color:#000;transform:scaleX(1.1080);">2D</span>
<span class="t" id="t52" style="left:1713.7px;top:1225.4px;font-size:19px;line-height:19px;color:#000;transform:scaleX(1.1429);">con</span>
<span class="t" id="t53" style="left:67.7px;top:347.0px;font-size:18.2px;line-height:18.2px;color:#a4a4a4;font-weight:300;transform:scaleX(1.1035);">画像</span>
<span class="t" id="t54" style="left:64.9px;top:377.0px;font-size:18.2px;line-height:18.2px;color:#a4a4a4;font-weight:300;transform:scaleX(0.8574);">コントロールポイント</span>
<span class="t" id="t55" style="left:66.8px;top:407.0px;font-size:18.2px;line-height:18.2px;color:#a4a4a4;font-weight:300;transform:scaleX(0.8954);">小さなコンポーネント</span>
<span class="t" id="t56" style="left:64.9px;top:437.0px;font-size:18.2px;line-height:18.2px;color:#a4a4a4;font-weight:300;transform:scaleX(0.8600);">コンポネント</span>
<span class="t" id="t57" style="left:168.6px;top:434.5px;font-size:21.8px;line-height:21.8px;color:#a8aeb8;transform:scaleX(1.0115);">0 (2)</span>
<span class="t" id="t58" style="left:610.3px;top:344.5px;font-size:21.8px;line-height:21.8px;color:#a4a4a4;transform:scaleX(0.8947);">171</span>
<span class="t" id="t59" style="left:651.8px;top:347.0px;font-size:18.2px;line-height:18.2px;color:#a4a4a4;font-weight:300;transform:scaleX(1.0925);">画像</span>
<span class="t" id="t60" style="left:658.0px;top:377.0px;font-size:18.2px;line-height:18.2px;color:#a4a4a4;font-weight:300;transform:scaleX(0.8864);">なし</span>
<span class="t" id="t61" style="left:521.5px;top:404.5px;font-size:21.8px;line-height:21.8px;color:#ad6d38;transform:scaleX(0.9132);">17</span>
<span class="t" id="t62" style="left:549.5px;top:407.0px;font-size:18.2px;line-height:18.2px;color:#ad6d38;font-weight:300;transform:scaleX(0.9507);">カメラ以下が</span>
<span class="t" id="t63" style="left:654.7px;top:404.5px;font-size:21.8px;line-height:21.8px;color:#ad6d38;transform:scaleX(0.8884);">10</span>
<span class="t" id="t64" style="left:676.5px;top:407.0px;font-size:18.2px;line-height:18.2px;color:#ad6d38;font-weight:300;transform:scaleX(0.8271);">つ</span>
<span class="t" id="t65" style="left:485.8px;top:434.5px;font-size:21.8px;line-height:21.8px;color:#a4a4a4;transform:scaleX(0.9295);">162/171</span>
<span class="t" id="t66" style="left:564.9px;top:437.0px;font-size:18.2px;line-height:18.2px;color:#a4a4a4;font-weight:300;transform:scaleX(0.8292);">カメラ</span>
<span class="t" id="t67" style="left:610.9px;top:434.5px;font-size:21.8px;line-height:21.8px;color:#a4a4a4;transform:scaleX(0.8980);">,</span>
<span class="t" id="t68" style="left:625.1px;top:434.5px;font-size:21.8px;line-height:21.8px;color:#a4a4a4;transform:scaleX(0.8036);">1</span>
<span class="t" id="t69" style="left:641.3px;top:437.0px;font-size:18.2px;line-height:18.2px;color:#a4a4a4;font-weight:300;transform:scaleX(0.9098);">モデル</span>
<span class="t" id="t70" style="left:727.0px;top:1201.6px;font-size:18px;line-height:18px;color:#8e8e8e;font-weight:300;transform:scaleX(1.0761);">画像</span>
<span class="t" id="t71" style="left:771.9px;top:1201.6px;font-size:18.7px;line-height:18.7px;color:#8e8e8e;transform:scaleX(1.0841);">&#x27;20201115_120346.jpg&#x27;</span>
<span class="t" id="t72" style="left:979.3px;top:1201.6px;font-size:18px;line-height:18px;color:#8e8e8e;font-weight:300;transform:scaleX(0.8967);">で</span>
<span class="t" id="t73" style="left:995.7px;top:1201.6px;font-size:18.7px;line-height:18.7px;color:#8e8e8e;transform:scaleX(1.0525);">10567</span>
<span class="t" id="t74" style="left:1050.6px;top:1201.6px;font-size:18px;line-height:18px;color:#8e8e8e;font-weight:300;transform:scaleX(0.8806);">個のフィーチャーを検出しました。</span>
<span class="t" id="t75" style="left:727.0px;top:1227.4px;font-size:18px;line-height:18px;color:#8e8e8e;font-weight:300;transform:scaleX(1.0761);">画像</span>
<span class="t" id="t76" style="left:771.9px;top:1227.4px;font-size:18.7px;line-height:18.7px;color:#8e8e8e;transform:scaleX(1.0841);">&#x27;20201115_120451.jpg&#x27;</span>
<span class="t" id="t77" style="left:979.3px;top:1227.4px;font-size:18px;line-height:18px;color:#8e8e8e;font-weight:300;transform:scaleX(0.8967);">で</span>
<span class="t" id="t78" style="left:994.6px;top:1227.4px;font-size:18.7px;line-height:18.7px;color:#8e8e8e;transform:scaleX(1.0822);">6234</span>
<span class="t" id="t79" style="left:1039.8px;top:1227.4px;font-size:18px;line-height:18px;color:#8e8e8e;font-weight:300;transform:scaleX(0.8806);">個のフィーチャーを検出しました。</span>
<span class="t" id="t80" style="left:727.0px;top:1253.2px;font-size:18px;line-height:18px;color:#8e8e8e;font-weight:300;transform:scaleX(1.0761);">画像</span>
<span class="t" id="t81" style="left:771.9px;top:1253.2px;font-size:18.7px;line-height:18.7px;color:#8e8e8e;transform:scaleX(1.0841);">&#x27;20201115_120514.jpg&#x27;</span>
<span class="t" id="t82" style="left:979.3px;top:1253.2px;font-size:18px;line-height:18px;color:#8e8e8e;font-weight:300;transform:scaleX(0.8967);">で</span>
<span class="t" id="t83" style="left:994.6px;top:1253.2px;font-size:18.7px;line-height:18.7px;color:#8e8e8e;transform:scaleX(1.0822);">6076</span>
<span class="t" id="t84" style="left:1039.8px;top:1253.2px;font-size:18px;line-height:18px;color:#8e8e8e;font-weight:300;transform:scaleX(0.8806);">個のフィーチャーを検出しました。</span>
<span class="t" id="t85" style="left:727.0px;top:1279.0px;font-size:18px;line-height:18px;color:#8e8e8e;font-weight:300;transform:scaleX(1.0761);">画像</span>
<span class="t" id="t86" style="left:771.9px;top:1279.0px;font-size:18.7px;line-height:18.7px;color:#8e8e8e;transform:scaleX(1.0841);">&#x27;20201115_120516.jpg&#x27;</span>
<span class="t" id="t87" style="left:979.3px;top:1279.0px;font-size:18px;line-height:18px;color:#8e8e8e;font-weight:300;transform:scaleX(0.8967);">で</span>
<span class="t" id="t88" style="left:994.6px;top:1279.0px;font-size:18.7px;line-height:18.7px;color:#8e8e8e;transform:scaleX(1.0822);">6933</span>
<span class="t" id="t89" style="left:1039.8px;top:1279.0px;font-size:18px;line-height:18px;color:#8e8e8e;font-weight:300;transform:scaleX(0.8806);">個のフィーチャーを検出しました。</span>
<span class="t" id="t90" style="left:727.0px;top:1304.8px;font-size:18px;line-height:18px;color:#8e8e8e;font-weight:300;transform:scaleX(1.0761);">画像</span>
<span class="t" id="t91" style="left:771.9px;top:1304.8px;font-size:18.7px;line-height:18.7px;color:#8e8e8e;transform:scaleX(1.0841);">&#x27;20201115_120704.jpg&#x27;</span>
<span class="t" id="t92" style="left:979.3px;top:1304.8px;font-size:18px;line-height:18px;color:#8e8e8e;font-weight:300;transform:scaleX(0.8967);">で</span>
<span class="t" id="t93" style="left:994.6px;top:1304.8px;font-size:18.7px;line-height:18.7px;color:#8e8e8e;transform:scaleX(1.0822);">4388</span>
<span class="t" id="t94" style="left:1039.8px;top:1304.8px;font-size:18px;line-height:18px;color:#8e8e8e;font-weight:300;transform:scaleX(0.8806);">個のフィーチャーを検出しました。</span>
<span class="t" id="t95" style="left:727.0px;top:1330.6px;font-size:18px;line-height:18px;color:#8e8e8e;font-weight:300;transform:scaleX(1.0761);">画像</span>
<span class="t" id="t96" style="left:771.9px;top:1330.6px;font-size:18.7px;line-height:18.7px;color:#8e8e8e;transform:scaleX(1.0841);">&#x27;20201115_120519.jpg&#x27;</span>
<span class="t" id="t97" style="left:979.3px;top:1330.6px;font-size:18px;line-height:18px;color:#8e8e8e;font-weight:300;transform:scaleX(0.8967);">で</span>
<span class="t" id="t98" style="left:995.7px;top:1330.6px;font-size:18.7px;line-height:18.7px;color:#8e8e8e;transform:scaleX(1.0814);">11363</span>
<span class="t" id="t99" style="left:1050.6px;top:1330.6px;font-size:18px;line-height:18px;color:#8e8e8e;font-weight:300;transform:scaleX(0.8806);">個のフィーチャーを検出しました。</span>
<span class="t" id="t100" style="left:727.0px;top:1356.4px;font-size:18px;line-height:18px;color:#8e8e8e;font-weight:300;transform:scaleX(1.0761);">画像</span>
<span class="t" id="t101" style="left:771.9px;top:1356.4px;font-size:18.7px;line-height:18.7px;color:#8e8e8e;transform:scaleX(1.0841);">&#x27;20201115_120522.jpg&#x27;</span>
<span class="t" id="t102" style="left:979.3px;top:1356.4px;font-size:18px;line-height:18px;color:#8e8e8e;font-weight:300;transform:scaleX(0.8967);">で</span>
<span class="t" id="t103" style="left:994.6px;top:1356.4px;font-size:18.7px;line-height:18.7px;color:#8e8e8e;transform:scaleX(1.0822);">6936</span>
<span class="t" id="t104" style="left:1039.8px;top:1356.4px;font-size:18px;line-height:18px;color:#8e8e8e;font-weight:300;transform:scaleX(0.8806);">個のフィーチャーを検出しました。</span>
<span class="t" id="t105" style="left:1802.8px;top:1338.6px;font-size:20px;line-height:20px;color:#a66b3c;transform:scaleX(0.9993);">C:¥Users¥saijo¥Desktop¥Gingy¥</span>
<span class="t" id="t106" style="left:1802.8px;top:1369.5px;font-size:20px;line-height:20px;color:#a66b3c;transform:scaleX(1.0358);">20201115_115903.jpg</span>
<span class="t" id="t107" style="left:2011.2px;top:1369.5px;font-size:20px;line-height:20px;color:#e8e8e8;font-weight:300;transform:scaleX(0.8409);">[レジスト 済み ]</span>
</div>
<div id="over">
<!-- console clip -->
<div class="a" style="left:716px;top:1194.4px;width:1049px;height:8.4px;background:#000;"></div>
<div class="a" style="left:716px;top:1359.5px;width:1023px;height:34.3px;background:#151515;"></div>
<!-- red annotation -->
<svg class="a" style="left:0;top:0;" width="2357" height="1419"><path fill-rule="evenodd" fill="#fe0000" d="M511.7,87.6 H688.3 V246.3 H511.7 Z M531.8,107.8 V226.2 H668.5 V107.8 Z"/></svg>
<svg class="a" style="left:0;top:0;" width="2357" height="1419" viewBox="0 0 2357 1419">
<polygon points="568.4,288.4 582.5,333.8 571.1,333.8 556,708.6 547.6,708.4 562.7,333.8 550.8,333.8" fill="#fe0000"/>
</svg>

</div>
</body></html>
